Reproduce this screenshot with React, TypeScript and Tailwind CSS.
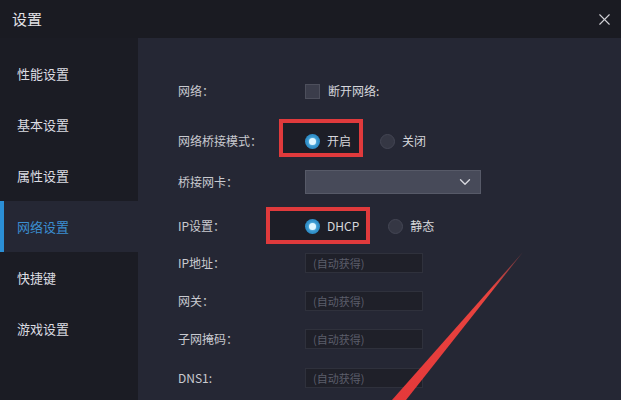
import React from 'react';
import { ChevronDown, X } from 'lucide-react';

const font = { fontFamily: '"Noto Sans CJK SC", "Noto Sans", sans-serif' };

const menu = ['性能设置', '基本设置', '属性设置', '网络设置', '快捷键', '游戏设置'];

const Radio = ({ on, label }: { on?: boolean; label: string }) => (
  <div className="flex items-center gap-[7px]">
    {on ? (
      <span className="w-[15px] h-[15px] rounded-full bg-[#2f8fc9] flex items-center justify-center">
        <span className="w-[7px] h-[7px] rounded-full bg-[#dff6ff] shadow-[0_0_3px_#9be2ff]" />
      </span>
    ) : (
      <span className="w-[15px] h-[15px] rounded-full bg-[#353744] border border-[#444654]" />
    )}
    <span className="text-[12px] text-[#d6d7dc]">{label}</span>
  </div>
);

const AutoInput = () => (
  <div className="w-[118px] h-[20px] bg-[#1f2029] border border-[#2f313c] flex items-center px-[7px]">
    <span className="text-[11px] text-[#5c5e6b]">(自动获得)</span>
  </div>
);

const Row = ({ label, mt, children }: { label: string; mt: string; children?: React.ReactNode }) => (
  <div className={`flex items-center h-[24px] ${mt}`}>
    <div className="w-[127px] text-[12px] text-[#c9cad0]">{label}</div>
    {children}
  </div>
);

export default function App() {
  return (
    <div className="relative w-[621px] h-[400px] overflow-hidden flex flex-col bg-[#252734]" style={font}>
      <div className="h-[38px] shrink-0 bg-[#1a1b22] flex items-center justify-between pl-[12px] pr-[7px]">
        <span className="text-[15px] text-[#e2e2e6]">设置</span>
        <X size={19} strokeWidth={1.4} className="text-[#d0d0d6]" />
      </div>
      <div className="flex flex-1">
        <div className="w-[138px] shrink-0 bg-[#1b1c24] pt-[10px]">
          {menu.map((m) => {
            const active = m === '网络设置';
            return (
              <div
                key={m}
                className={`h-[51px] flex items-center pl-[17px] text-[13px] relative ${
                  active ? 'bg-[#252734] text-[#3b8ed0]' : 'text-[#dcdde2]'
                }`}
              >
                {active && <span className="absolute left-0 top-0 bottom-0 w-[4px] bg-[#2b8fd6]" />}
                {m}
              </div>
            );
          })}
        </div>
        <div className="flex-1 flex flex-col pl-[40px]">
          <Row label="网络：" mt="mt-[41px]">
            <div className="flex items-center gap-[8px]">
              <span className="w-[15px] h-[15px] bg-[#3b3d4b] border border-[#4d4f5c]" />
              <span className="text-[12px] text-[#d6d7dc]">断开网络:</span>
            </div>
          </Row>
          <Row label="网络桥接模式：" mt="mt-[26px]">
            <div className="relative flex items-center gap-[29px]">
              <div className="absolute left-[-26px] top-[-13px] w-[84px] h-[38px] border-[4px] border-[#e03a3c] bg-[#1d1e27]" />
              <div className="relative">
                <Radio on label="开启" />
              </div>
              <Radio label="关闭" />
            </div>
          </Row>
          <Row label="桥接网卡：" mt="mt-[17px]">
            <div className="w-[176px] h-[24px] bg-[#474a59] border border-[#575a68] flex items-center justify-end pr-[6px]">
              <ChevronDown size={18} strokeWidth={1.8} className="text-[#d6d7de]" />
            </div>
          </Row>
          <Row label="IP设置：" mt="mt-[20px]">
            <div className="relative flex items-center gap-[29px]">
              <div className="absolute left-[-39px] top-[-10px] w-[104px] h-[37px] border-[4px] border-[#e03a3c] bg-[#1d1e27]" />
              <div className="relative">
                <Radio on label="DHCP" />
              </div>
              <Radio label="静态" />
            </div>
          </Row>
          <Row label="IP地址：" mt="mt-[13px]">
            <AutoInput />
          </Row>
          <Row label="网关：" mt="mt-[14px]">
            <AutoInput />
          </Row>
          <Row label="子网掩码：" mt="mt-[14px]">
            <AutoInput />
          </Row>
          <Row label="DNS1:" mt="mt-[15px]">
            <AutoInput />
          </Row>
        </div>
      </div>
      <svg className="absolute inset-0 pointer-events-none" width="621" height="400" viewBox="0 0 621 400">
        <defs>
          <linearGradient id="lg" x1="523" y1="252" x2="400" y2="400" gradientUnits="userSpaceOnUse">
            <stop offset="0" stopColor="#e8504a" stopOpacity="0.3" />
            <stop offset="0.25" stopColor="#e8443f" />
            <stop offset="1" stopColor="#e5393a" />
          </linearGradient>
        </defs>
        <polygon points="523,252 406,400 392,400" fill="url(#lg)" />
      </svg>
    </div>
  );
}
